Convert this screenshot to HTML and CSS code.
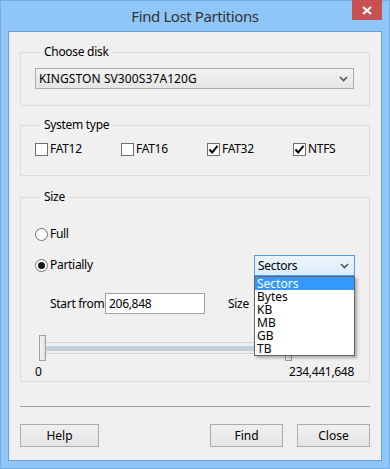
FILE: index.html
```html
<!DOCTYPE html>
<html lang="en">

<head>
  <meta charset="UTF-8">
  <title>Find Lost Partitions</title>
  <link rel="stylesheet" href="styles.css">
</head>

<body>
  <div class="window">
    <header class="titlebar">
      <span></span>
      <h1>Find Lost Partitions</h1>
      <button class="close" aria-label="Close">
        <svg width="10" height="9" viewBox="0 0 10 9">
          <path d="M1 1 L9 8 M9 1 L1 8" stroke="#fff" stroke-width="2.2" />
        </svg>
      </button>
    </header>

    <main class="client">
      <fieldset class="group group-disk">
        <legend>Choose disk</legend>
        <div class="combo">
          <span class="disk-name">KINGSTON SV300S37A120G</span>
          <svg class="chevron" width="9" height="6" viewBox="0 0 9 6">
            <path d="M1 1 L4.5 4.5 L8 1" stroke="#555" stroke-width="1.6" fill="none" />
          </svg>
        </div>
      </fieldset>

      <fieldset class="group group-type">
        <legend>System type</legend>
        <div class="checks">
          <label class="check"><span class="box"></span>FAT12</label>
          <label class="check"><span class="box"></span>FAT16</label>
          <label class="check"><span class="box checked"><svg width="11" height="11" viewBox="0 0 11 11"><path d="M1.5 5.5 L4.2 8.5 L9.5 1.8" stroke="#000" stroke-width="2" fill="none" /></svg></span>FAT32</label>
          <label class="check"><span class="box checked"><svg width="11" height="11" viewBox="0 0 11 11"><path d="M1.5 5.5 L4.2 8.5 L9.5 1.8" stroke="#000" stroke-width="2" fill="none" /></svg></span>NTFS</label>
        </div>
      </fieldset>

      <fieldset class="group group-size">
        <legend>Size</legend>
        <label class="radio"><span class="dot"></span>Full</label>

        <div class="partial-row">
          <label class="radio"><span class="dot on"></span>Partially</label>
          <div class="unit-picker">
            <div class="combo combo-open">
              <span>Sectors</span>
              <svg class="chevron" width="9" height="6" viewBox="0 0 9 6">
                <path d="M1 1 L4.5 4.5 L8 1" stroke="#555" stroke-width="1.6" fill="none" />
              </svg>
            </div>
            <ul class="dropdown">
              <li class="selected">Sectors</li>
              <li>Bytes</li>
              <li>KB</li>
              <li>MB</li>
              <li>GB</li>
              <li>TB</li>
            </ul>
          </div>
        </div>

        <div class="start-row">
          <span class="start-label">Start from</span>
          <div class="textbox">206,848</div>
          <span class="size-label">Size</span>
        </div>

        <div class="slider">
          <span class="thumb"></span>
          <div class="track"><div class="fill"></div></div>
          <span class="thumb"></span>
        </div>

        <div class="range-labels">
          <span>0</span>
          <span>234,441,648</span>
        </div>
      </fieldset>

      <hr class="separator">

      <div class="buttons">
        <button class="btn btn-wide">Help</button>
        <span class="spacer"></span>
        <button class="btn">Find</button>
        <button class="btn">Close</button>
      </div>
    </main>
  </div>
</body>

</html>
```

FILE: styles.css
```css
/* Globals */
* {
  box-sizing: border-box;
  margin: 0;
}

body {
  font-family: 'Noto Sans', 'Open Sans', sans-serif;
  font-size: 12px;
  line-height: 16px;
  letter-spacing: -0.3px;
  color: #000;
  background: #8fc6f8;
}

/* Window frame */
.window {
  inline-size: 390px;
  block-size: 469px;
  background: #8fc6f8;
  border: 1px solid #74aee6;
  display: flex;
  flex-direction: column;
}

.titlebar {
  block-size: 30px;
  display: grid;
  grid-template-columns: 30px 1fr 30px;
  align-items: start;
  margin-inline-end: 7px;
}

.titlebar h1 {
  font-size: 15px;
  font-weight: 400;
  letter-spacing: -0.4px;
  color: #333;
  text-align: center;
  padding-block-start: 5px;
  line-height: 20px;
  margin-inline-start: 7px;
}

.close {
  block-size: 20px;
  inline-size: 30px;
  margin-block-start: -1px;
  border: 0;
  background: #c75050;
  display: flex;
  align-items: center;
  justify-content: center;
  padding: 0;
}

/* Client area */
.client {
  flex: 1;
  margin: 0 7px 7px;
  background: #f0f0f0;
  border: 1px solid #6d9ccf;
  padding: 12px 11px 0;
  display: flex;
  flex-direction: column;
}

/* Group boxes */
.group {
  min-inline-size: 0;
  border: 1px solid #dcdcdc;
  padding: 0 15px 0 14px;
  margin-block-end: 13px;
}

.group legend {
  padding-inline: 3px;
  margin-inline-start: 6px;
}

.group-disk {
  padding-block: 8px 16px;
  margin-block-end: 11px;
}

.group-type {
  padding-block: 8px 18px;
}

.group-size {
  padding-block: 21px 1px;
  margin-block-end: 0;
}

/* Combo box */
.combo {
  block-size: 21px;
  border: 1px solid #acacac;
  background: linear-gradient(#f2f2f2, #e5e5e5);
  display: flex;
  align-items: center;
  justify-content: space-between;
  padding-inline: 3px 5px;
}

.disk-name {
  letter-spacing: 0.1px;
}

.combo-open {
  border-color: #569de5;
  background: linear-gradient(#ecf4fc, #dcecfc);
}

/* Check boxes */
.checks {
  display: flex;
}

.check {
  display: flex;
  align-items: center;
  gap: 2px;
  inline-size: 86px;
}

.check:last-child {
  inline-size: auto;
}

.box {
  inline-size: 13px;
  block-size: 13px;
  border: 1px solid #707070;
  background: #fff;
  display: flex;
  align-items: center;
  justify-content: center;
}

/* Radio buttons */
.radio {
  display: flex;
  align-items: center;
  gap: 2px;
}

.dot {
  inline-size: 13px;
  block-size: 13px;
  border: 1px solid #707070;
  border-radius: 50%;
  background: #fff;
  display: flex;
  align-items: center;
  justify-content: center;
}

.dot.on::after {
  content: "";
  inline-size: 7px;
  block-size: 7px;
  border-radius: 50%;
  background: #1a1a1a;
}

.partial-row {
  display: flex;
  justify-content: space-between;
  align-items: flex-start;
  margin-block-start: 13px;
}

.partial-row .radio {
  margin-block-start: 2px;
}

.unit-picker {
  position: relative;
  inline-size: 101px;
  margin-inline-end: -1px;
}

.dropdown {
  position: absolute;
  inset-block-start: 21px;
  inset-inline: 0;
  list-style: none;
  padding: 0;
  background: #fff;
  border: 1px solid #646464;
  box-shadow: 2px 2px 3px rgb(0 0 0 / 0.3);
  z-index: 2;
  line-height: 13px;
  font-size: 12px;
  letter-spacing: 0;
}

.dropdown li {
  padding-inline: 2px;
}

.dropdown .selected {
  background: #3399ff;
  color: #fff;
}

/* Start from row */
.start-row {
  display: flex;
  align-items: center;
  margin-block-start: 17px;
  padding-inline-start: 15px;
}

.start-label {
  inline-size: 50px;
  white-space: nowrap;
}

.textbox {
  inline-size: 100px;
  block-size: 21px;
  margin-inline-start: 5px;
  border: 1px solid #a0a0a0;
  background: #fff;
  padding-inline: 3px;
  line-height: 19px;
}

.size-label {
  margin-inline-start: 23px;
}

/* Slider */
.slider {
  display: flex;
  align-items: center;
  margin-block-start: 21px;
  padding-inline: 4px 62px;
}

.thumb {
  inline-size: 7px;
  block-size: 26px;
  border: 1px solid #a0a0a0;
  background: linear-gradient(90deg, #f4f4f4, #e2e2e2);
}

.track {
  flex: 1;
  block-size: 12px;
  border-block: 1px solid #d6d6d6;
  display: flex;
  align-items: center;
}

.fill {
  flex: 1;
  block-size: 5px;
  background: #c3d1dd;
}

.range-labels {
  display: flex;
  justify-content: space-between;
  margin-block-start: 3px;
}

/* Separator and buttons */
.separator {
  border: 0;
  border-block-start: 1px solid #a0a0a0;
  margin-block: 24px 17px;
}

.buttons {
  display: flex;
  gap: 14px;
}

.spacer {
  flex: 1;
}

.btn {
  font: inherit;
  inline-size: 73px;
  block-size: 23px;
  border: 1px solid #acacac;
  background: linear-gradient(#f0f0f0, #e5e5e5);
  color: #000;
}

.btn-wide {
  inline-size: 79px;
}
```
